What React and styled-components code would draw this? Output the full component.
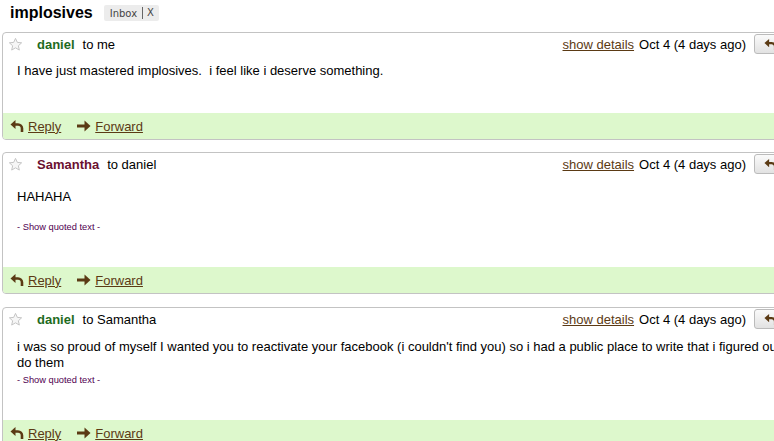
import React from "react";
import styled, { createGlobalStyle } from "styled-components";

const Global = createGlobalStyle`
  html, body { margin: 0; padding: 0; overflow: hidden; background: #fff; }
  body { font-family: "Liberation Sans", Arial, sans-serif; font-size: 13px; color: #000; }
`;

const Page = styled.div`
  width: 858px;
  padding-left: 2px;
`;

const TitleBar = styled.div`
  display: flex;
  align-items: center;
  height: 26px;
  margin-bottom: 6px;
  padding-left: 8px;
`;

const Title = styled.h1`
  margin: 0;
  font-size: 16px;
  font-weight: bold;
  font-family: "Liberation Sans", Arial, sans-serif;
`;

const Label = styled.span`
  display: inline-flex;
  align-items: center;
  margin-left: 11px;
  height: 16px;
  padding: 0 5px 0 6px;
  background: #ececec;
  border-radius: 2px;
  font-family: "DejaVu Sans", Verdana, sans-serif;
  font-size: 10px;
  color: #444;
`;

const LabelX = styled.span`
  margin-left: 5px;
  padding-left: 4px;
  border-left: 1px solid #666;
  line-height: 12px;
`;

const Card = styled.div`
  border: 1px solid #c3c3c3;
  border-radius: 4px 0 0 4px;
  margin-bottom: ${(p) => p.$gap}px;
  overflow: hidden;
`;

const Header = styled.div`
  display: flex;
  align-items: center;
  height: 22px;
  padding-left: 5px;
`;

const Name = styled.b`
  margin-left: 14px;
  color: ${(p) => p.$color};
`;

const To = styled.span`
  margin-left: 8px;
`;

const Spacer = styled.div`
  flex: 1;
`;

const Link = styled.a`
  color: #5b3a14;
  text-decoration: underline;
  cursor: pointer;
`;

const DateText = styled.span`
  margin-left: 5px;
`;

const ButtonGroup = styled.div`
  display: flex;
  margin-left: 8px;
  margin-right: 57px;
  align-self: flex-start;
  margin-top: 1px;
`;

const HdrButton = styled.div`
  display: flex;
  align-items: center;
  justify-content: center;
  width: ${(p) => p.$w}px;
  height: 20px;
  border: 1px solid #bbb;
  border-radius: ${(p) => (p.$first ? "3px 0 0 3px" : "0 3px 3px 0")};
  ${(p) => (p.$first ? "" : "border-left: none;")}
  background: linear-gradient(#fafafa, #e2e2e2);
  box-sizing: border-box;
`;

const Body = styled.div`
  padding: ${(p) => 8 + (p.$extraTop || 0)}px 36px 34px 14px;
  line-height: 16px;
`;

const Line = styled.div`
  min-height: 13px;
`;

const Quoted = styled.div`
  margin-top: 3px;
  font-size: 9.3px;
  line-height: 12px;
  color: #500050;
`;

const Footer = styled.div`
  display: flex;
  align-items: center;
  height: 26px;
  padding-left: 7px;
  background: #ddf8cc;
  gap: 16px;
`;

const Action = styled.span`
  display: inline-flex;
  align-items: center;
  gap: 4px;
`;

const ReplyIcon = ({ size = 14 }) => (
  <svg width={size} height={size} viewBox="0 0 14 14">
    <path d="M5.5 1 L0.5 5.5 L5.5 10 Z" fill="#5b3a14" />
    <path d="M4.5 5.5 H8 A4 4 0 0 1 12 9.5 V13" fill="none" stroke="#5b3a14" strokeWidth="2.6" />
  </svg>
);

const ForwardIcon = () => (
  <svg width="14" height="12" viewBox="0 0 14 12">
    <rect x="0" y="4.5" width="8" height="3" fill="#5b3a14" />
    <path d="M7.5 0.5 L13.5 6 L7.5 11.5 Z" fill="#5b3a14" />
  </svg>
);

const Star = () => (
  <svg width="15" height="15" viewBox="0 0 24 24">
    <path
      d="M12 2.2 L14.9 8.6 L21.8 9.3 L16.6 14 L18.1 20.9 L12 17.3 L5.9 20.9 L7.4 14 L2.2 9.3 L9.1 8.6 Z"
      fill="#f6f6f6"
      stroke="#c4c4c4"
      strokeWidth="1.6"
      strokeLinejoin="round"
    />
  </svg>
);

const Caret = () => (
  <svg width="7" height="4" viewBox="0 0 7 4">
    <path d="M0 0 H7 L3.5 4 Z" fill="#555" />
  </svg>
);

const messages = [
  {
    from: "daniel",
    color: "#1e6b1e",
    to: "to me",
    gap: 12,
    lines: ["I have just mastered implosives.\u00a0 i feel like i deserve something."],
    quoted: false,
  },
  {
    from: "Samantha",
    color: "#6b1030",
    to: "to daniel",
    gap: 13,
    extraTop: 6,
    lines: ["HAHAHA", ""],
    quoted: true,
  },
  {
    from: "daniel",
    color: "#1e6b1e",
    to: "to Samantha",
    gap: 12,
    extraTop: 1,
    lines: [
      "i was so proud of myself I wanted you to reactivate your facebook (i couldn't find you) so i had a public place to write that i figured out how to do them",
    ],
    quoted: true,
  },
];

function Message({ m }) {
  return (
    <Card $gap={m.gap}>
      <Header>
        <Star />
        <Name $color={m.color}>{m.from}</Name>
        <To>{m.to}</To>
        <Spacer />
        <Link>show details</Link>
        <DateText>Oct 4 (4 days ago)</DateText>
        <ButtonGroup>
          <HdrButton $w={32} $first>
            <ReplyIcon size={13} />
          </HdrButton>
          <HdrButton $w={16}>
            <Caret />
          </HdrButton>
        </ButtonGroup>
      </Header>
      <Body $extraTop={m.extraTop}>
        {m.lines.map((l, i) => (
          <Line key={i}>{l}</Line>
        ))}
        {m.quoted && <Quoted>- Show quoted text -</Quoted>}
      </Body>
      <Footer>
        <Action>
          <ReplyIcon />
          <Link>Reply</Link>
        </Action>
        <Action>
          <ForwardIcon />
          <Link>Forward</Link>
        </Action>
      </Footer>
    </Card>
  );
}

export default function App() {
  return (
    <>
      <Global />
      <Page>
        <TitleBar>
          <Title>implosives</Title>
          <Label>
            Inbox<LabelX>X</LabelX>
          </Label>
        </TitleBar>
        {messages.map((m, i) => (
          <Message key={i} m={m} />
        ))}
      </Page>
    </>
  );
}
